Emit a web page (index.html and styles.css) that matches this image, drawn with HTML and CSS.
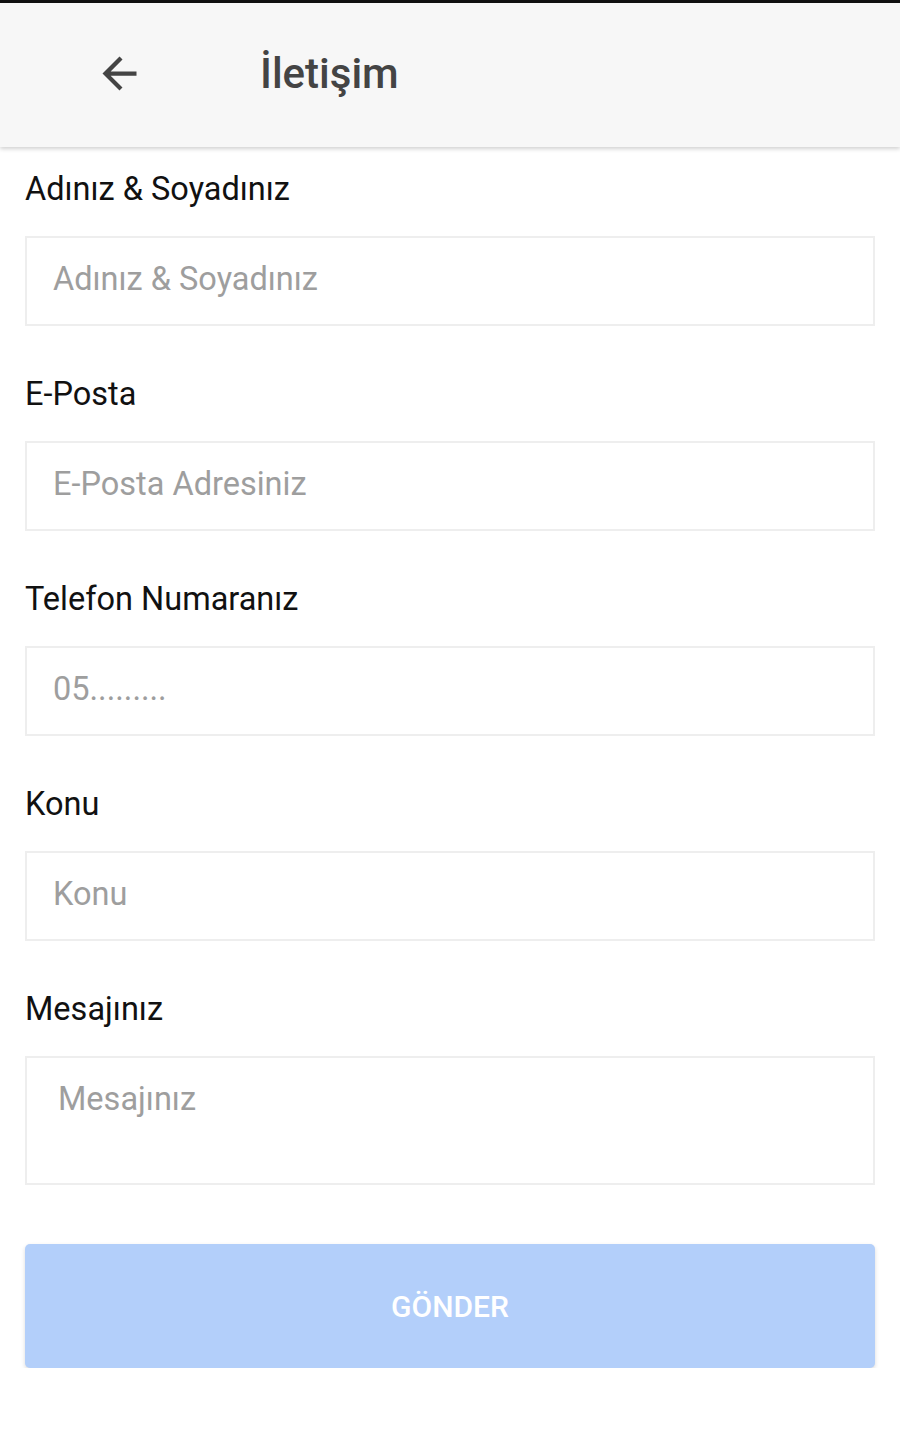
FILE: index.html
```html
<!DOCTYPE html>
<html lang="tr">
<head>
<meta charset="utf-8">
<title>İletişim</title>
<link rel="stylesheet" href="styles.css">
</head>
<body>
<div class="statusbar"></div>
<header class="appbar">
  <span class="back">
    <svg viewBox="0 0 24 24" width="51" height="51"><path d="M20 11H7.83l5.59-5.59L12 4l-8 8 8 8 1.41-1.41L7.83 13H20v-2z" fill="#444"/></svg>
  </span>
  <h1 class="title">İletişim</h1>
</header>
<form class="form">
  <label class="field">
    <span class="label">Adınız &amp; Soyadınız</span>
    <input class="input" type="text" placeholder="Adınız &amp; Soyadınız">
  </label>
  <label class="field">
    <span class="label">E-Posta</span>
    <input class="input" type="email" placeholder="E-Posta Adresiniz">
  </label>
  <label class="field">
    <span class="label">Telefon Numaranız</span>
    <input class="input" type="tel" placeholder="05.........">
  </label>
  <label class="field">
    <span class="label">Konu</span>
    <input class="input" type="text" placeholder="Konu">
  </label>
  <label class="field">
    <span class="label">Mesajınız</span>
    <textarea class="input textarea" placeholder="Mesajınız"></textarea>
  </label>
  <button class="submit" type="button">GÖNDER</button>
</form>
</body>
</html>
```

FILE: styles.css
```css
* { box-sizing: border-box; }
html, body {
  margin: 0;
  padding: 0;
  background: #fff;
  font-family: Roboto, "Noto Sans", sans-serif;
}
.statusbar {
  height: 3px;
  background: #111;
}
.appbar {
  height: 144px;
  background: #f7f7f7;
  display: flex;
  align-items: center;
  box-shadow: 0 2px 4px rgba(0,0,0,0.18);
  position: relative;
  z-index: 1;
}
.back {
  display: flex;
  margin-left: 94px;
  margin-top: -4px;
}
.title {
  margin: -4px 0 0 115px;
  font-size: 42px;
  font-weight: 500;
  color: #444;
}
.form {
  display: flex;
  flex-direction: column;
  padding: 23px 25px 0;
}
.field {
  display: flex;
  flex-direction: column;
  margin-bottom: 49px;
}
.label {
  font-size: 32.5px;
  line-height: 38px;
  color: #111;
  margin-bottom: 28px;
}
.input {
  height: 90px;
  border: 2px solid #eeeeee;
  border-radius: 0;
  padding: 0 26px 4px;
  font-family: Roboto, "Noto Sans", sans-serif;
  font-size: 32.5px;
  color: #333;
  background: #fff;
  outline: none;
}
.input::placeholder {
  color: #9e9e9e;
}
.textarea {
  height: 129px;
  resize: none;
  padding: 22px 31px;
  line-height: 38px;
}
.field:last-of-type {
  margin-bottom: 59px;
}
.submit {
  height: 124px;
  border: none;
  border-radius: 5px;
  background: #b3cffa;
  color: #fff;
  font-family: Roboto, "Noto Sans", sans-serif;
  font-size: 30px;
  font-weight: 500;
  box-shadow: 0 2px 4px rgba(0,0,0,0.15);
}
```
